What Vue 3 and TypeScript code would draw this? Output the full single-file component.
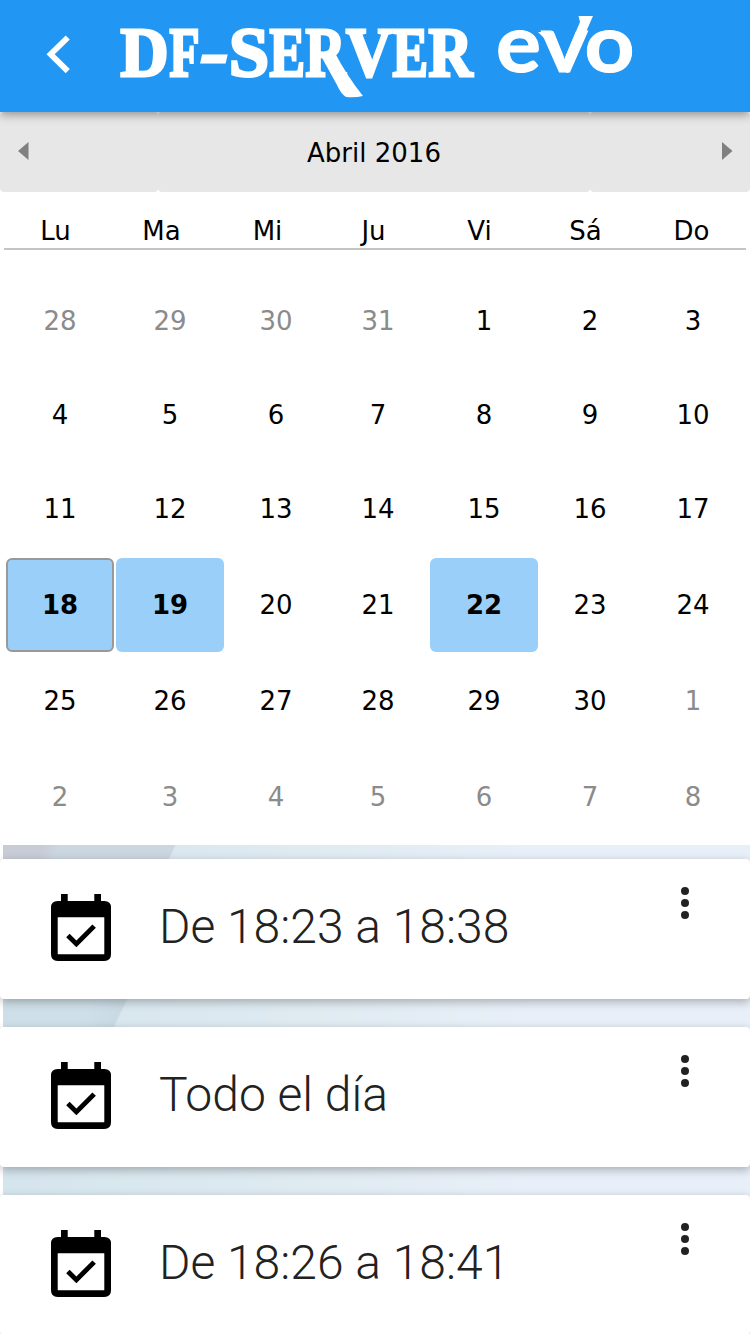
<script setup lang="ts">
interface Day {
  n: number
  other?: boolean
  event?: boolean
  today?: boolean
}

interface Letter {
  c: string
  x: number
  w: number
}

const weekdays: string[] = ['Lu', 'Ma', 'Mi', 'Ju', 'Vi', 'Sá', 'Do']
const eventDays: number[] = [18, 19, 22]
const today = 18

const days: Day[] = [
  ...[28, 29, 30, 31].map((n) => ({ n, other: true })),
  ...Array.from({ length: 30 }, (_, i) => ({
    n: i + 1,
    event: eventDays.includes(i + 1),
    today: i + 1 === today,
  })),
  ...Array.from({ length: 8 }, (_, i) => ({ n: i + 1, other: true })),
]

const wordmark: Letter[] = [
  { c: 'D', x: 120.5, w: 48 },
  { c: 'F', x: 169.5, w: 30 },
  { c: '-', x: 200.5, w: 28 },
  { c: 'S', x: 229, w: 40 },
  { c: 'E', x: 269.5, w: 35.5 },
  { c: 'R', x: 305.5, w: 40 },
  { c: 'V', x: 346, w: 46 },
  { c: 'E', x: 392.5, w: 35.5 },
  { c: 'R', x: 428.5, w: 44 },
]

const suffix: Letter[] = [
  { c: 'e', x: 496, w: 45 },
  { c: 'v', x: 541, w: 47 },
  { c: 'o', x: 584.5, w: 50 },
]

const events: string[] = ['De 18:23 a 18:38', 'Todo el día', 'De 18:26 a 18:41']
</script>

<template>
  <div class="screen">
    <header class="bar">
      <svg class="brand" width="750" height="112" viewBox="0 0 750 112" fill="#fff">
        <path d="M46.5 54.3 65.7 35.5 69.8 39.5 54.7 54.3 69.8 69 65.7 73.2Z" />
        <g class="server">
          <text
            v-for="(l, i) in wordmark"
            :key="i"
            :class="{ dash: l.c === '-' }"
            :x="l.x"
            y="75.500"
            :textLength="l.w"
            lengthAdjust="spacingAndGlyphs"
          >{{ l.c }}</text>
        </g>
        <path d="M321 56 335 53Q347 76 363 96Q355 98 346 97Q341 94 337 85Z" />
        <g class="evo">
          <text
            v-for="l in suffix"
            :key="l.c"
            :x="l.x"
            y="72"
            :textLength="l.w"
            lengthAdjust="spacingAndGlyphs"
          >{{ l.c }}</text>
        </g>
        <path d="M563 62 580 22 578.500 16 593 16 568 73 562 71Z" />
        <path d="M538 32 551 32 552 38 544 38Z" />
      </svg>
    </header>

    <section class="calendar">
      <div class="month-bar">
        <div class="seg prev">
          <svg width="12" height="20" viewBox="0 0 12 20"><path d="M0 10 10.500 1V19Z" fill="#808080" /></svg>
        </div>
        <div class="seg month">Abril 2016</div>
        <div class="seg next">
          <svg width="12" height="20" viewBox="0 0 12 20"><path d="M11.500 10 1 1V19Z" fill="#808080" /></svg>
        </div>
      </div>
      <div class="weekdays">
        <span v-for="w in weekdays" :key="w">{{ w }}</span>
      </div>
      <div class="days">
        <div
          v-for="(d, i) in days"
          :key="i"
          class="day"
          :class="{ other: d.other, event: d.event, today: d.today }"
        >{{ d.n }}</div>
      </div>
    </section>

    <main class="list">
      <article v-for="e in events" :key="e" class="card">
        <svg class="icon" width="60" height="67" viewBox="51 894 60 67">
          <path
            fill-rule="evenodd"
            d="M61 894H67.700V901H94.300V894H101V901H104.300Q111 901 111 907.500V954.300Q111 961 104.300 961H57.700Q51 961 51 954.300V907.500Q51 901 57.700 901H61ZM57.700 917.300V954.200H104.300V917.300Z"
          />
          <path d="M66.200 937.200 69.600 933.700 76.400 940.400 92.400 924.400 95.900 927.800 76.400 947.200Z" />
        </svg>
        <h2>{{ e }}</h2>
        <svg class="more" width="10" height="34" viewBox="0 0 10 34" fill="#222">
          <circle cx="5" cy="5" r="4" />
          <circle cx="5" cy="17" r="4" />
          <circle cx="5" cy="29" r="4" />
        </svg>
      </article>
    </main>
  </div>
</template>

<style>
body {
  margin: 0;
  background: #fff;
}
</style>

<style scoped>
.screen {
  width: 750px;
  height: 1334px;
  overflow: hidden;
  display: flex;
  flex-direction: column;
  font-family: 'DejaVu Sans', sans-serif;
}
.bar {
  position: relative;
  z-index: 2;
  flex: none;
  height: 112px;
  background: #2196f3;
  box-shadow: 0 2px 10px rgba(0, 0, 0, 0.42);
}
.brand {
  display: block;
}
.server {
  font: bold 70px 'Liberation Serif', serif;
  stroke: #fff;
  stroke-width: 3px;
}
.dash {
  font-style: italic;
}
.evo {
  font: bold 80px Lato, sans-serif;
  stroke: #fff;
  stroke-width: 1px;
}
.calendar {
  flex: none;
  height: 733px;
  background: #fff;
  font-size: 26px;
  color: #000;
}
.month-bar {
  display: grid;
  grid-template-columns: 158px 432px 160px;
  height: 80px;
}
.seg {
  display: flex;
  align-items: center;
  background: #e7e7e7;
  border-radius: 4px;
  box-sizing: border-box;
}
.prev {
  padding: 0 0 2px 18px;
}
.month {
  justify-content: center;
  padding-top: 2px;
}
.next {
  justify-content: flex-end;
  padding: 0 17px 2px 0;
}
.weekdays {
  display: grid;
  grid-template-columns: repeat(7, 106px);
  height: 56px;
  margin: 0 4px;
  border-bottom: 2px solid #c4c4c4;
  text-align: center;
  line-height: 78px;
}
.weekdays span {
  margin-left: -3px;
}
.days {
  display: grid;
  grid-template-columns: 110px 110px 102px 102px 110px 102px 104px;
  grid-template-rows: 94px 94px 95px 96px 96px 96px;
  padding: 24px 5px 0;
}
.day {
  display: flex;
  align-items: center;
  justify-content: center;
  margin: 1px;
  border-radius: 6px;
  box-sizing: border-box;
}
.day:nth-child(n + 15):nth-child(-n + 21) {
  padding-bottom: 1px;
}
.other {
  color: #8b8b8b;
}
.event {
  background: #9acffa;
  font-weight: bold;
}
.today {
  border: 2px solid #999;
}
.list {
  flex: 1;
  display: flex;
  flex-direction: column;
  gap: 28px;
  padding-top: 14px;
  background:
    linear-gradient(90deg, #fff 3px, transparent 3px),
    linear-gradient(115deg, #c8ccd6 0 40px, #cbd6e1 55px 158px, transparent 160px) 0 0 / 100% 60px no-repeat,
    linear-gradient(115deg, #cfdfe9 0 90px, #c9dae4 120px, transparent 122px) 0 140px / 100% 60px no-repeat,
    linear-gradient(90deg, #d5e5ed, #dfeaf1 40%, #e8eff8 70%);
}
.card {
  flex: none;
  display: flex;
  align-items: flex-start;
  height: 140px;
  padding: 0 60px 0 51px;
  box-sizing: border-box;
  background: #fff;
  border-radius: 4px;
  box-shadow: 0 3px 10px rgba(0, 0, 0, 0.28);
}
.icon {
  flex: none;
  margin-top: 35px;
}
h2 {
  flex: 1;
  margin: 0 0 0 46px;
  padding-top: 36px;
  padding-left: 2px;
  font: 300 48px/64px Roboto, sans-serif;
  color: #222;
}
.more {
  flex: none;
  margin-top: 27px;
}
</style>
